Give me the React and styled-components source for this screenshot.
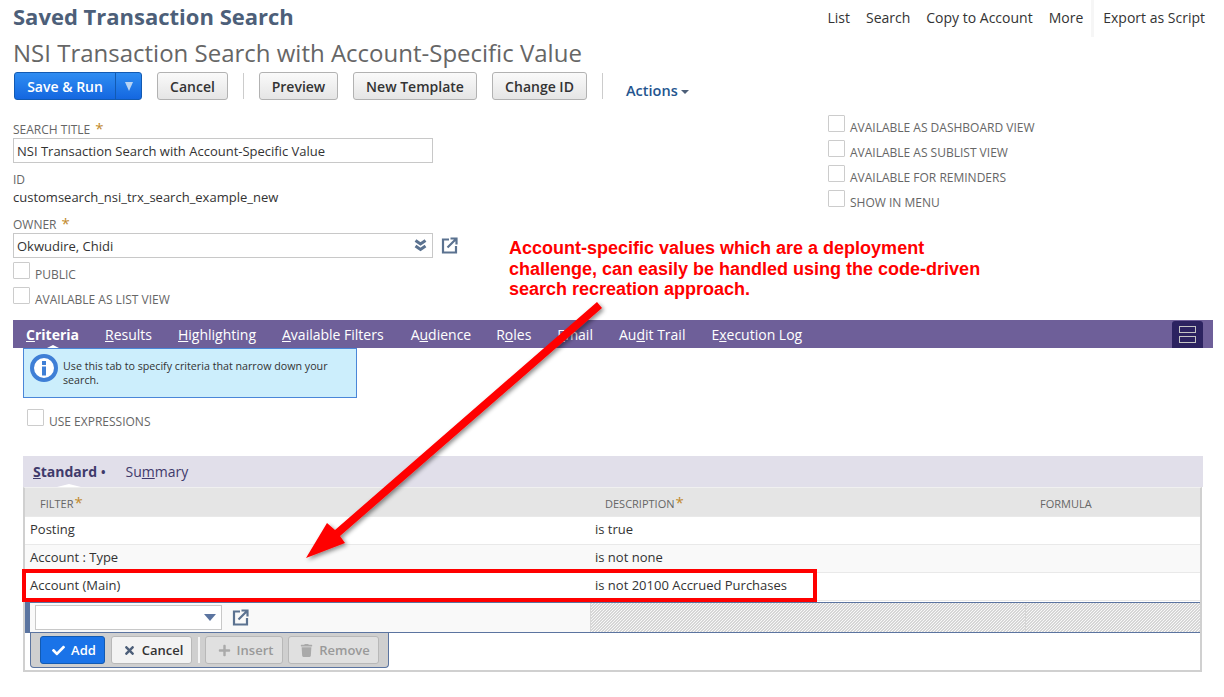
import React from "react";
import styled, { createGlobalStyle } from "styled-components";
import { FaCheck, FaTimes, FaPlus, FaTrash } from "react-icons/fa";

const GlobalStyle = createGlobalStyle`
  html, body {
    margin: 0;
    padding: 0;
    background: #fff;
  }
  body {
    font-family: "Open Sans", "Liberation Sans", sans-serif;
    color: #333;
  }
`;

const Page = styled.div`
  position: relative;
  width: 1224px;
  height: 697px;
  overflow: hidden;
  background: #fff;
`;

const TitleBar = styled.div`
  display: flex;
  justify-content: space-between;
  height: 37px;
  padding: 0 19px 0 13px;
`;

const PageType = styled.h1`
  margin: 0;
  font-size: 22px;
  line-height: 33px;
  font-weight: 700;
  color: #4d5f79;
`;

const TopNav = styled.nav`
  display: flex;
  font-size: 14px;
  line-height: 36px;
  color: #333;
`;

const TopLink = styled.span`
  margin-left: ${p => p.$gap}px;
`;

const TopDivider = styled.span`
  width: 3px;
  height: 37px;
  margin: 0 9px 0 8px;
  background: #f6f6f6;
`;

const RecordTitle = styled.h2`
  margin: 0;
  padding: 0 0 4px 13px;
  font-size: 24px;
  line-height: 31px;
  font-weight: 400;
  color: #666;
`;

const Toolbar = styled.div`
  display: flex;
  align-items: center;
  height: 28px;
  padding-left: 14px;
`;

const SplitButton = styled.div`
  display: flex;
  width: 128px;
  height: 28px;
  box-sizing: border-box;
  border: 1px solid #125ab2;
  border-radius: 3px;
  background: linear-gradient(#2f8df2, #1467e0);
  color: #fff;
  font-weight: 600;
  font-size: 14px;
  line-height: 28px;
`;

const SplitLabel = styled.span`
  width: 100px;
  text-align: center;
  border-right: 1px solid #125ab2;
`;

const SplitCaret = styled.span`
  flex: 1;
  display: flex;
  align-items: center;
  justify-content: center;
  &::before {
    content: "";
    border-left: 4px solid transparent;
    border-right: 4px solid transparent;
    border-top: 9px solid #b9d4f3;
  }
`;

const Button = styled.button`
  height: 28px;
  width: ${p => p.$width}px;
  margin-left: ${p => p.$gap}px;
  padding: 0;
  box-sizing: border-box;
  border: 1px solid #b2b2b2;
  border-radius: 3px;
  background: linear-gradient(#fafafa, #e5e5e5);
  color: #333;
  font-family: inherit;
  font-size: 14px;
  font-weight: 600;
`;

const ToolDivider = styled.span`
  width: 1px;
  height: 26px;
  margin-left: ${p => p.$gap}px;
  background: #ccc;
`;

const ActionsLink = styled.span`
  margin: 8px 0 0 23px;
  font-size: 14.5px;
  font-weight: 600;
  color: #24558f;
  &::after {
    content: "";
    display: inline-block;
    margin-left: 3px;
    vertical-align: 2px;
    border-left: 4px solid transparent;
    border-right: 4px solid transparent;
    border-top: 4px solid #4d5f79;
  }
`;

const FormArea = styled.div`
  display: flex;
  height: 220px;
  padding-left: 13px;
`;

const LeftFields = styled.div`
  width: 815px;
  padding-top: 22px;
`;

const RightFields = styled.div`
  padding-top: 15px;
`;

const FieldLabel = styled.div`
  font-size: 12px;
  line-height: 16px;
  color: #666;
  text-transform: uppercase;
`;

const Required = styled.span`
  margin-left: 5px;
  font-size: 15px;
  line-height: 10px;
  color: #c28a2c;
`;

const TextField = styled.div`
  display: flex;
  align-items: center;
  justify-content: space-between;
  box-sizing: border-box;
  width: 420px;
  height: 25px;
  padding: 0 5px 0 3px;
  border: 1px solid #c8c8c8;
  font-size: 13px;
  color: #333;
`;

const FieldValue = styled.div`
  font-size: 13px;
  line-height: 18px;
  color: #333;
`;

const FieldGroup = styled.div`
  margin-top: ${p => p.$top}px;
`;

const FieldRow = styled.div`
  display: flex;
  align-items: center;
  gap: 8px;
`;

const CheckRow = styled.div`
  display: flex;
  height: 25px;
`;

const CheckBox = styled.span`
  box-sizing: border-box;
  width: 17px;
  height: 17px;
  border: 1px solid #ccc;
  border-radius: 1px;
  background: #fff;
`;

const CheckLabel = styled.span`
  margin: 4px 0 0 5px;
  font-size: 12px;
  line-height: 17px;
  color: #666;
`;

const TabBar = styled.div`
  display: flex;
  align-items: center;
  justify-content: space-between;
  box-sizing: border-box;
  width: 1200px;
  height: 28px;
  margin-left: 13px;
  padding: 0 10px 0 13px;
  background: #6e5f99;
`;

const TabList = styled.div`
  display: flex;
`;

const Tab = styled.span`
  position: relative;
  margin-right: ${p => p.$gap}px;
  padding-top: 1px;
  font-size: 14px;
  line-height: 27px;
  font-weight: ${p => (p.$active ? 700 : 400)};
  color: #fff;
  ${p =>
    p.$active &&
    `&::after {
      content: "";
      position: absolute;
      left: 50%;
      bottom: 0;
      margin-left: -6px;
      border-left: 6px solid transparent;
      border-right: 6px solid transparent;
      border-bottom: 3px solid #fff;
    }`}
`;

const LayoutToggle = styled.span`
  display: flex;
  flex-direction: column;
  align-items: center;
  justify-content: center;
  gap: 3px;
  width: 31px;
  height: 27px;
  margin-top: 1px;
  border-radius: 3px 3px 0 0;
  background: #2c2360;
`;

const ToggleBar = styled.span`
  box-sizing: border-box;
  width: 17px;
  height: 7px;
  border: 1px solid #c4c4c4;
`;

const InfoBox = styled.div`
  display: flex;
  box-sizing: border-box;
  width: 334px;
  height: 50px;
  margin-left: 23px;
  padding: 5px 6px;
  gap: 5px;
  border: 1px solid #4a86d8;
  background: #cceefc;
  font-size: 10.7px;
  line-height: 14px;
  color: #333;
`;

const InfoText = styled.div`
  width: 285px;
  padding-top: 5px;
`;

const ExpressionRow = styled(CheckRow)`
  margin: 11px 0 0 27px;
`;

const SubTabs = styled.div`
  display: flex;
  box-sizing: border-box;
  width: 1180px;
  height: 31px;
  margin: 22px 0 0 23px;
  padding-left: 10px;
  background: #e1dfea;
`;

const SubTab = styled.span`
  position: relative;
  margin-right: 20px;
  font-size: 14px;
  line-height: 32px;
  font-weight: ${p => (p.$active ? 700 : 400)};
  color: #3f3a6b;
  ${p =>
    p.$active &&
    `&::after {
      content: "";
      position: absolute;
      left: 24px;
      bottom: 0;
      border-left: 12px solid transparent;
      border-right: 12px solid transparent;
      border-bottom: 3px solid #fff;
    }`}
`;

const Dot = styled.span`
  margin-left: 4px;
  font-size: 12px;
`;

const Grid = styled.div`
  box-sizing: border-box;
  width: 1179px;
  height: 185px;
  margin-left: 23px;
  border: solid #d0d0d0;
  border-width: 1px 2px 2px 2px;
  border-top-color: #f0f0f0;
`;

const Row = styled.div`
  display: grid;
  grid-template-columns: 565px 435px 1fr;
  height: ${p => p.$height || 28}px;
  box-sizing: border-box;
  background: ${p => p.$bg || "#fff"};
  border-bottom: 1px solid #e9e9e9;
`;

const HeadCell = styled.div`
  padding-left: 15px;
  font-size: 11px;
  line-height: 31px;
  color: #666;
  text-transform: uppercase;
`;

const HeadStar = styled.span`
  margin-left: 1px;
  font-size: 15px;
  line-height: 10px;
  color: #c28a2c;
`;

const Cell = styled.div`
  padding-left: 5px;
  font-size: 13px;
  line-height: 24px;
  color: #333;
`;

const EditRow = styled.div`
  display: grid;
  grid-template-columns: 565px 435px 1fr;
  box-sizing: border-box;
  height: 31px;
  margin-top: 1px;
  border-top: 1px solid #5b74a0;
  border-bottom: 1px solid #5b74a0;
`;

const EditCell = styled.div`
  display: flex;
  align-items: center;
  gap: 10px;
  box-sizing: border-box;
  padding-left: 5px;
  background: #f9f9f9;
  border-left: 5px solid #5b74a0;
`;

const HatchCell = styled.div`
  border-left: 1px solid #d6d6d6;
  background-image: linear-gradient(
    135deg,
    #d6d6d6 25%,
    #f8f8f8 25%,
    #f8f8f8 50%,
    #d6d6d6 50%,
    #d6d6d6 75%,
    #f8f8f8 75%
  );
  background-size: 3px 3px;
`;

const MiniSelect = styled.div`
  display: flex;
  align-items: center;
  justify-content: flex-end;
  box-sizing: border-box;
  width: 187px;
  height: 25px;
  padding-right: 5px;
  border: 1px solid #c8c8c8;
  background: #fff;
  &::after {
    content: "";
    border-left: 6px solid transparent;
    border-right: 6px solid transparent;
    border-top: 7px solid #5b74a0;
  }
`;

const MachineBar = styled.div`
  display: flex;
  align-items: center;
  box-sizing: border-box;
  width: 359px;
  height: 35px;
  margin-left: 5px;
  padding-left: 9px;
  background: #cfcfcf;
  border: 1px solid #5b74a0;
  border-top: 0;
  border-radius: 0 0 4px 4px;
`;

const MachineButton = styled.button`
  display: flex;
  align-items: center;
  justify-content: center;
  gap: 6px;
  box-sizing: border-box;
  height: 28px;
  width: ${p => p.$width}px;
  margin-left: ${p => p.$gap || 0}px;
  padding: 0 0 0 3px;
  border: 1px solid ${p => (p.$primary ? "#125ab2" : "#b8b8b8")};
  border-radius: 3px;
  background: ${p => (p.$primary ? "#1a73e8" : p.$muted ? "#e0e0e0" : "#f3f3f3")};
  color: ${p => (p.$primary ? "#fff" : p.$muted ? "#999" : "#333")};
  font-family: inherit;
  font-size: 13px;
  font-weight: 600;
  svg {
    font-size: 13px;
    color: ${p => (p.$primary ? "#fff" : p.$muted ? "#aaa" : "#4d5f79")};
  }
`;

const MachineDivider = styled.span`
  width: 2px;
  height: 26px;
  margin-left: 6px;
  background: #f4f4f4;
`;

const Callout = styled.div`
  position: absolute;
  left: 509px;
  top: 238px;
  width: 500px;
  font-family: "Liberation Sans", Arial, sans-serif;
  font-size: 18px;
  line-height: 20.5px;
  font-weight: 700;
  color: #f00;
`;

const ArrowLayer = styled.svg`
  position: absolute;
  left: 0;
  top: 0;
  pointer-events: none;
`;

const Highlight = styled.div`
  position: absolute;
  left: 22px;
  top: 569px;
  width: 795px;
  height: 33px;
  box-sizing: border-box;
  border: 4px solid #f00;
`;

const ExternalIcon = () => (
  <svg width="17" height="17" viewBox="0 0 17 17" fill="none" stroke="#5b7290" strokeWidth="2.2">
    <path d="M8 2.5H2v13h13V9" />
    <path d="M6.5 10.5L15 2M9.5 1.5H15.5V7.5" />
  </svg>
);

const DoubleChevron = () => (
  <svg width="13" height="13" viewBox="0 0 13 13" fill="none" stroke="#5b7290" strokeWidth="3">
    <path d="M1.5 1.5L6.5 5L11.5 1.5" />
    <path d="M1.5 7L6.5 10.5L11.5 7" />
  </svg>
);

const InfoIcon = () => (
  <svg width="28" height="28" viewBox="0 0 28 28" style={{ flexShrink: 0 }}>
    <circle cx="14" cy="14" r="12" fill="#fff" stroke="#3f7fd6" strokeWidth="4" />
    <rect x="12" y="7" width="4" height="4" fill="#3f7fd6" />
    <rect x="12" y="12.5" width="4" height="9" fill="#3f7fd6" />
  </svg>
);

const Check = ({ children }) => (
  <CheckRow>
    <CheckBox />
    <CheckLabel>{children}</CheckLabel>
  </CheckRow>
);

const tabs = [
  [<><u>C</u>riteria</>, 26, true],
  [<><u>R</u>esults</>, 26],
  [<><u>H</u>ighlighting</>, 26],
  [<><u>A</u>vailable Filters</>, 27],
  [<>A<u>u</u>dience</>, 25],
  [<>R<u>o</u>les</>, 26],
  [<><u>E</u>mail</>, 26],
  [<>Au<u>d</u>it Trail</>, 26],
  [<>E<u>x</u>ecution Log</>, 0],
];

const App = () => (
  <Page>
    <GlobalStyle />
    <TitleBar>
      <PageType>Saved Transaction Search</PageType>
      <TopNav>
        <TopLink>List</TopLink>
        <TopLink $gap={16}>Search</TopLink>
        <TopLink $gap={16}>Copy to Account</TopLink>
        <TopLink $gap={16}>More</TopLink>
        <TopDivider />
        <TopLink>Export as Script</TopLink>
      </TopNav>
    </TitleBar>
    <RecordTitle>NSI Transaction Search with Account-Specific Value</RecordTitle>
    <Toolbar>
      <SplitButton>
        <SplitLabel>Save &amp; Run</SplitLabel>
        <SplitCaret />
      </SplitButton>
      <Button $width={71} $gap={15}>Cancel</Button>
      <ToolDivider $gap={15} />
      <Button $width={79} $gap={15}>Preview</Button>
      <Button $width={124} $gap={15}>New Template</Button>
      <Button $width={95} $gap={15}>Change ID</Button>
      <ToolDivider $gap={15} />
      <ActionsLink>Actions</ActionsLink>
    </Toolbar>
    <FormArea>
      <LeftFields>
        <FieldLabel>Search Title<Required>*</Required></FieldLabel>
        <TextField>NSI Transaction Search with Account-Specific Value</TextField>
        <FieldGroup $top={9}>
          <FieldLabel>ID</FieldLabel>
          <FieldValue>customsearch_nsi_trx_search_example_new</FieldValue>
        </FieldGroup>
        <FieldGroup $top={11}>
          <FieldLabel>Owner<Required>*</Required></FieldLabel>
          <FieldRow>
            <TextField>
              Okwudire, Chidi
              <DoubleChevron />
            </TextField>
            <ExternalIcon />
          </FieldRow>
        </FieldGroup>
        <FieldGroup $top={4}>
          <Check>PUBLIC</Check>
          <Check>AVAILABLE AS LIST VIEW</Check>
        </FieldGroup>
      </LeftFields>
      <RightFields>
        <Check>AVAILABLE AS DASHBOARD VIEW</Check>
        <Check>AVAILABLE AS SUBLIST VIEW</Check>
        <Check>AVAILABLE FOR REMINDERS</Check>
        <Check>SHOW IN MENU</Check>
      </RightFields>
    </FormArea>
    <TabBar>
      <TabList>
        {tabs.map(([label, gap, active], i) => (
          <Tab key={i} $gap={gap} $active={active}>{label}</Tab>
        ))}
      </TabList>
      <LayoutToggle>
        <ToggleBar />
        <ToggleBar />
      </LayoutToggle>
    </TabBar>
    <InfoBox>
      <InfoIcon />
      <InfoText>Use this tab to specify criteria that narrow down your search.</InfoText>
    </InfoBox>
    <ExpressionRow>
      <CheckBox />
      <CheckLabel>USE EXPRESSIONS</CheckLabel>
    </ExpressionRow>
    <SubTabs>
      <SubTab $active><u>S</u>tandard<Dot>•</Dot></SubTab>
      <SubTab>Su<u>m</u>mary</SubTab>
    </SubTabs>
    <Grid>
      <Row $height={29} $bg="#e5e5e5">
        <HeadCell>Filter<HeadStar>*</HeadStar></HeadCell>
        <HeadCell>Description<HeadStar>*</HeadStar></HeadCell>
        <HeadCell>Formula</HeadCell>
      </Row>
      <Row>
        <Cell>Posting</Cell>
        <Cell>is true</Cell>
        <Cell />
      </Row>
      <Row $bg="#f9f9f9">
        <Cell>Account : Type</Cell>
        <Cell>is not none</Cell>
        <Cell />
      </Row>
      <Row>
        <Cell>Account (Main)</Cell>
        <Cell>is not 20100 Accrued Purchases</Cell>
        <Cell />
      </Row>
      <EditRow>
        <EditCell>
          <MiniSelect />
          <ExternalIcon />
        </EditCell>
        <HatchCell />
        <HatchCell />
      </EditRow>
      <MachineBar>
        <MachineButton $primary $width={65}><FaCheck />Add</MachineButton>
        <MachineButton $width={81} $gap={6}><FaTimes />Cancel</MachineButton>
        <MachineDivider />
        <MachineButton $muted $width={78} $gap={5}><FaPlus />Insert</MachineButton>
        <MachineButton $muted $width={91} $gap={5}><FaTrash />Remove</MachineButton>
      </MachineBar>
    </Grid>

    <Callout>
      Account-specific values which are a deployment<br />
      challenge, can easily be handled using the code-driven<br />
      search recreation approach.
    </Callout>
    <Highlight />
    <ArrowLayer width="1224" height="697" viewBox="0 0 1224 697">
      <defs>
        <filter id="arrowShadow" x="-10%" y="-10%" width="120%" height="120%">
          <feDropShadow dx="2" dy="2" stdDeviation="2" floodColor="#000" floodOpacity="0.45" />
        </filter>
      </defs>
      <path
        d="M597 302L602 308L340 536L345 543L306 558L327 523L335 530Z"
        fill="#f00"
        filter="url(#arrowShadow)"
      />
    </ArrowLayer>
  </Page>
);

export default App;
